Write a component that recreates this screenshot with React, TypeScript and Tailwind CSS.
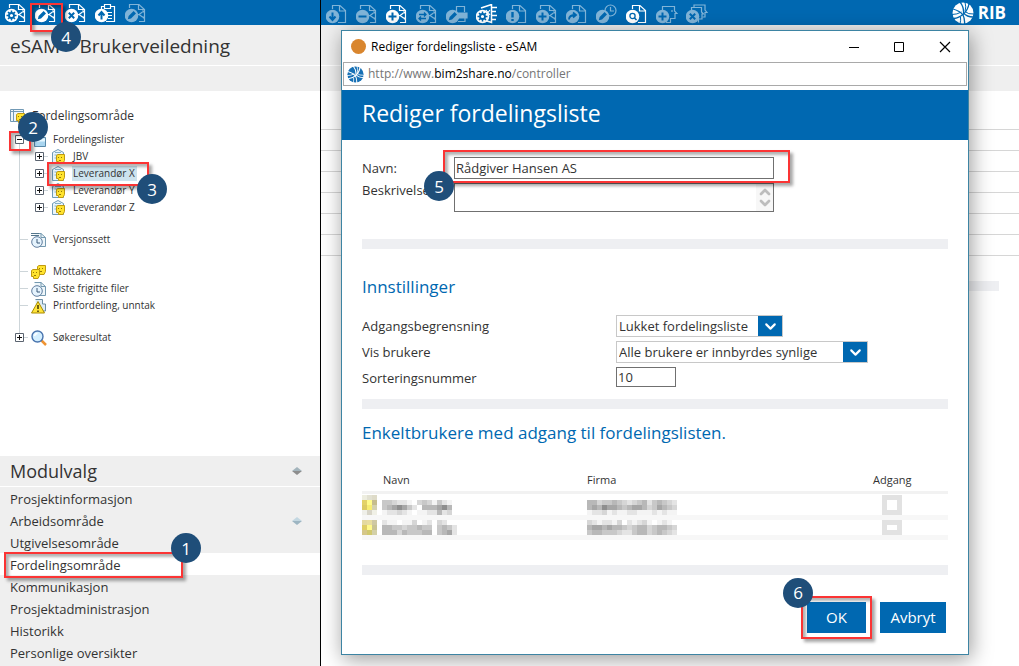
import React from "react";
import { ChevronDown, ChevronUp } from "lucide-react";

type Glyph =
  | "gear" | "pencil" | "cross" | "up" | "down" | "minus" | "plus" | "swap" | "alert" | "forward" | "search";
type Backing = "share" | "page" | "clipboard" | "printer" | "sheets" | "clock" | "head" | "heads";

function BackingShape({ kind }: { kind: Backing }) {
  switch (kind) {
    case "share":
      return (
        <>
          <path d="M4.5 5V1.5H14L19.5 6.5V18.5H14M13.5 1.5V6.5H19" />
          <path d="M17.5 9L14 11.5L17.5 14" />
          <path d="M17 8h1.500v1.500M17 14h1.500v1.500M13 11.500h1.500" />
        </>
      );
    case "page":
      return <path d="M6.500 5V1.500H14L19.500 6.500V18.500H12M13.500 1.500V7H19.500" />;
    case "clipboard":
      return (
        <>
          <path d="M6.500 6V3.500H9M16 3.500H19.500V18.500H11" />
          <path d="M9.500 1.500H15.500V5.500H9.500Z M12 9.500H17M13 12.500H17M13 15.500H17" />
        </>
      );
    case "printer":
      return (
        <>
          <path d="M10.500 8V2.500H18.500V8" />
          <path d="M8 9H21V14H11" fill="currentColor" />
          <path d="M12 17.500H19V14" />
        </>
      );
    case "sheets":
      return (
        <>
          <path d="M5 4L15.500 0.500V18.500L11 17M15.500 3.500H21M15.500 7.500H20M15.500 11.500H21M15.500 15.500H20" strokeWidth="1.500" />
          <path d="M10 6L14 11M14 6L10 11" />
        </>
      );
    case "clock":
      return (
        <>
          <circle cx="14.500" cy="6.500" r="5.500" />
          <path d="M14.500 3V7H18" />
        </>
      );
    case "head":
      return <path d="M6.500 6V2.500H18.500V7L21 9.500H19V14.500H14.500V18.500H10M16 6V8" />;
    case "heads":
      return (
        <>
          <path d="M5.500 6V3.500H15.500V8L17.500 10H16V15H12.500V18.500" />
          <path d="M8 3V1H19V6L21 8.500H19V13H16.500" />
        </>
      );
  }
}

function GlyphShape({ kind }: { kind: Glyph }) {
  switch (kind) {
    case "gear":
      return (
        <>
          <circle cx="6.500" cy="12.500" r="2.500" strokeWidth="1.800" />
          <path d="M6.500 7.500v2.500M6.500 15v2.500M1.500 12.500H4M9 12.500h2.500M3 9l1.800 1.800M8.200 14.200L10 16M3 16l1.800-1.800M8.200 10.800L10 9" strokeWidth="1.500" />
        </>
      );
    case "pencil":
      return <path d="M2.800 16.200L3.600 13L8.600 8L11 10.400L6 15.400Z" fill="#0068b1" stroke="none" />;
    case "cross":
      return <path d="M3.800 9.800L9.200 15.200M9.200 9.800L3.800 15.200" strokeWidth="2" />;
    case "up":
      return <path d="M6.500 16.500V10M3.500 12.500L6.500 9L9.500 12.500" strokeWidth="2" />;
    case "down":
      return <path d="M6.500 8.500V15M3.500 12.500L6.500 16L9.500 12.500" strokeWidth="2" />;
    case "minus":
      return <path d="M2.500 12.500H10.500" strokeWidth="2" />;
    case "plus":
      return <path d="M2.500 12.500H10.500M6.500 8.500V16.500" strokeWidth="2" />;
    case "swap":
      return <path d="M3 10.500H10M8 8.500L10 10.500L8 12.500M10 14.500H3M5 12.500L3 14.500L5 16.500" />;
    case "alert":
      return <path d="M6.500 8V13.500M6.500 15V17" strokeWidth="2.400" />;
    case "forward":
      return <path d="M3 15.500C3 12 5 11 9.500 11M7 8.500L10 11L7 13.500" strokeWidth="1.800" />;
    case "search":
      return (
        <>
          <circle cx="6.500" cy="12" r="2.600" />
          <path d="M8.500 14L10.500 16" strokeWidth="1.600" />
        </>
      );
  }
}

function ToolButton({ label, glyph, backing, dim }: { label: string; glyph: Glyph; backing: Backing; dim?: boolean }) {
  return (
    <button type="button" aria-label={label} className={dim ? "h-5 w-[22px] text-[#80b4d8]" : "h-5 w-[22px] text-white"}>
      <svg viewBox="0 0 22 20" width="22" height="20" fill="none" stroke="currentColor" strokeWidth="1.200">
        <BackingShape kind={backing} />
        <circle cx="6.500" cy="12.500" r="6.800" fill="currentColor" stroke="none" />
        <g stroke="#0068b1" strokeWidth="1.300">
          <GlyphShape kind={glyph} />
        </g>
      </svg>
    </button>
  );
}

function Badge({ n, className }: { n: number; className: string }) {
  return (
    <span className={`absolute z-20 flex size-[30px] items-center justify-center rounded-full bg-[#1f4e79] text-[17px] leading-none text-white ${className}`}>
      {n}
    </span>
  );
}

function Frame({ className }: { className: string }) {
  return (
    <span className={`pointer-events-none absolute z-10 border-2 border-[#fb3434] shadow-[3px_3px_3px_rgba(0,0,0,0.35),inset_3px_3px_3px_rgba(0,0,0,0.3)] ${className}`} />
  );
}

function RibMark({ size, disc, line }: { size: number; disc: string; line: string }) {
  return (
    <svg viewBox="0 0 22 22" width={size} height={size} fill="none">
      <circle cx="11" cy="11" r="10.500" fill={disc} />
      <g stroke={line} strokeWidth="1.300">
        <path d="M8 0Q12 5 11.500 11Q15 15 21 15" />
        <path d="M13 0Q14.500 5 13 9.500Q16 12.500 22 12" strokeWidth="1" />
        <path d="M17 1.500Q16 8 11.500 12Q7 16 1.500 16.500" />
        <path d="M0 12.500Q5 12.500 9.500 10" strokeWidth="1" />
        <path d="M1 7Q8 9 11 13Q13 17 12.500 22" />
        <path d="M8.500 15Q9 18 8 22" strokeWidth="1" />
      </g>
    </svg>
  );
}

function Face({ x, y }: { x: number; y: number }) {
  return (
    <g transform={`translate(${x} ${y})`}>
      <path d="M0.500 1.500L2 0.500H8.500V6.500L7 9.500H2.500V7.500H0.500Z" fill="#ffe32e" stroke="#c09a10" />
      <path d="M2 3.500H3M5 3.500H6M3 6.500H5" stroke="#8a6d00" strokeWidth="0.900" />
    </g>
  );
}

type TreeIconKind = "area" | "lists" | "party" | "versions" | "people" | "recent" | "warning" | "search";

function TreeIcon({ kind }: { kind: TreeIconKind }) {
  return (
    <svg viewBox="0 0 16 16" width="16" height="16" fill="none" className="shrink-0">
      {kind === "area" && (
        <>
          <path d="M0.500 1.500H13.500V13.500H0.500Z" fill="#edf5fa" stroke="#7199b5" />
          <path d="M1 3.500H13M3.500 2V13" stroke="#7199b5" />
          <Face x={6} y={5} />
        </>
      )}
      {kind === "lists" && (
        <>
          <path d="M1.500 2.500H9.500V9H1.500Z" fill="#edf5fa" stroke="#7199b5" />
          <path d="M3.500 5.500H14.500V14.500H3.500Z" fill="#a9d5ef" stroke="#5889a9" />
          <path d="M4 8H14" stroke="#e4f6ff" strokeWidth="3" />
        </>
      )}
      {kind === "party" && (
        <>
          <path d="M1.500 3.500L7 0.500L12.500 3.500V14.500H1.500Z" fill="#eaf5fb" stroke="#6f9bb8" />
          <path d="M4 3.500H10M3.500 6H10M3.500 9H8" stroke="#84b1c9" />
          <Face x={5} y={5} />
        </>
      )}
      {(kind === "versions" || kind === "recent") && (
        <>
          <path d="M3.500 1.500H10L14.500 5.500V14.500H5" fill="#eef6fa" stroke="#7499b0" />
          <path d="M10 1.500V5.500H14.500" stroke="#7499b0" />
          {kind === "versions" && <path d="M0 1.500H8M0 3.500H8" stroke="#55768c" />}
          <circle cx="6" cy="10" r="5.300" fill="#e5f3fd" stroke="#617d9e" />
          <path d="M6 7V11H9" stroke="#3b5978" />
        </>
      )}
      {kind === "people" && (
        <>
          <Face x={6} y={1} />
          <Face x={0} y={5} />
        </>
      )}
      {kind === "warning" && (
        <>
          <path d="M4.500 1.500H11.500V6H14.500V13H5" fill="#dceaf3" stroke="#6b8da3" />
          <path d="M7 3.500L13.500 15H0.500Z" fill="#ffe43b" stroke="#a98a00" />
          <path d="M7 7V11M7 12.500V14" stroke="#403300" strokeWidth="1.500" />
        </>
      )}
      {kind === "search" && (
        <>
          <path d="M10.500 10.500L15 15" stroke="#ef9332" strokeWidth="2.500" />
          <circle cx="6.500" cy="6.500" r="5.500" fill="#d4efff" stroke="#4974ae" strokeWidth="1.400" />
          <path d="M3.500 6Q4 3.500 6.500 3.500" stroke="#fff" strokeWidth="1.500" />
        </>
      )}
    </svg>
  );
}

function Expander({ open }: { open?: boolean }) {
  return (
    <button type="button" aria-label={open ? "Lukk" : "Åpne"} className="relative size-[9px] shrink-0">
      <svg viewBox="0 0 9 9" width="9" height="9" className="block" fill="#fff" stroke="#5b6470">
        <path d="M0.500 0.500H8.500V8.500H0.500Z" />
        <path d={open ? "M2 4.500H7" : "M2 4.500H7M4.500 2V7"} stroke="#111" />
      </svg>
    </button>
  );
}

type TreeRow = { label: string; icon: TreeIconKind; child?: boolean; expander?: "open" | "closed"; selected?: boolean; gap?: boolean; line?: "start" | "end" };

const treeRows: TreeRow[] = [
  { label: "Fordelingslister", icon: "lists", expander: "open", line: "start" },
  { label: "JBV", icon: "party", child: true, expander: "closed" },
  { label: "Leverandør X", icon: "party", child: true, expander: "closed", selected: true },
  { label: "Leverandør Y", icon: "party", child: true, expander: "closed" },
  { label: "Leverandør Z", icon: "party", child: true, expander: "closed" },
  { label: "Versjonssett", icon: "versions", gap: true },
  { label: "Mottakere", icon: "people", gap: true },
  { label: "Siste frigitte filer", icon: "recent" },
  { label: "Printfordeling, unntak", icon: "warning" },
  { label: "Søkeresultat", icon: "search", expander: "closed", gap: true, line: "end" },
];

function TreeItem({ row }: { row: TreeRow }) {
  const lineClass =
    row.line === "start"
      ? "absolute left-[19px] top-2 bottom-0 w-px bg-[#cdd5d9]"
      : row.line === "end"
        ? "absolute left-[19px] top-0 bottom-2 w-px bg-[#cdd5d9]"
        : "absolute left-[19px] inset-y-0 w-px bg-[#cdd5d9]";
  return (
    <li className={row.gap ? "relative pt-[15px]" : "relative"}>
      <span className={lineClass} />
      <div className={row.child ? "relative flex h-[17px] items-center pl-[35px]" : "relative flex h-[17px] items-center pl-[15px]"}>
        {row.expander ? <Expander open={row.expander === "open"} /> : <span className="ml-1 w-[5px] border-t border-[#cdd5d9]" />}
        <span className="w-1 border-t border-[#cdd5d9]" />
        <span className="w-[3px]" />
        <TreeIcon kind={row.icon} />
        <a href="#" className={row.selected ? "ml-[5px] bg-[#cde3ee] pr-[2px] pl-[1px] text-[10px] leading-[15px]" : "ml-[6px] text-[10px] leading-[15px]"}>
          {row.label}
        </a>
        {row.line === "start" && (
          <>
            <Frame className="top-0 left-[9px] h-5 w-[22px]" />
            <Badge n={2} className="-top-[19px] left-[18px]" />
          </>
        )}
        {row.selected && (
          <>
            <Frame className="-top-[3px] left-[47px] h-6 w-[102px]" />
            <Badge n={3} className="top-[9px] left-[137px]" />
          </>
        )}
      </div>
    </li>
  );
}

const modules = [
  "Prosjektinformasjon",
  "Arbeidsområde",
  "Utgivelsesområde",
  "Fordelingsområde",
  "Kommunikasjon",
  "Prosjektadministrasjon",
  "Historikk",
  "Personlige oversikter",
];

function Diamond({ top, bottom }: { top: string; bottom: string }) {
  return (
    <svg viewBox="0 0 10 8" width="10" height="8">
      <path d="M0 4L5 0L10 4Z" fill={top} />
      <path d="M0 4L5 8L10 4Z" fill={bottom} />
    </svg>
  );
}

function Sidebar() {
  return (
    <aside className="flex w-[321px] shrink-0 flex-col border-r border-black">
      <div className="relative flex h-[25px] gap-2 bg-[#0068b1] pt-[3px] pl-[5px]">
        <ToolButton label="Innstillinger" glyph="gear" backing="share" />
        <ToolButton label="Rediger" glyph="pencil" backing="share" />
        <ToolButton label="Slett" glyph="cross" backing="share" />
        <ToolButton label="Last opp" glyph="up" backing="clipboard" />
        <ToolButton label="Koble" glyph="pencil" backing="share" dim />
        <Frame className="top-[3px] left-[30px] h-[29px] w-[33px]" />
        <Badge n={4} className="top-[22px] left-[51px]" />
      </div>
      <h1 className="h-[41px] border-b border-white bg-[#efefef] pl-[10px] text-[19px] leading-[42px]">eSAM – Brukerveiledning</h1>
      <div className="h-[25px] bg-[#efefef]" />
      <nav className="flex-1 pt-4 pb-6">
        <div className="mb-[7px] flex h-[17px] items-center gap-[6px] pl-[10px] text-[12px]">
          <TreeIcon kind="area" />
          Fordelingsområde
        </div>
        <ul>
          {treeRows.map((row) => (
            <TreeItem key={row.label} row={row} />
          ))}
        </ul>
      </nav>
      <section className="bg-[#efefef] pb-[3px]">
        <div className="flex h-[31px] items-center justify-between border-b border-white pr-[18px] pl-[10px]">
          <h2 className="text-[18px]">Modulvalg</h2>
          <Diamond top="#a3b4bc" bottom="#8d8d8d" />
        </div>
        <ul className="text-[13px] leading-5">
          {modules.map((m, i) => (
            <li key={m} className={i === 3 ? "relative bg-white" : "relative"}>
              <a href="#" className="flex h-[22px] items-center justify-between pt-[2px] pr-[18px] pl-[10px]">
                {m}
                {i === 1 && <Diamond top="#c3d7e1" bottom="#9db5c2" />}
              </a>
              {i === 3 && (
                <>
                  <Frame className="-top-px left-1 h-[26px] w-[179px]" />
                  <Badge n={1} className="-top-5 left-[171px]" />
                </>
              )}
            </li>
          ))}
        </ul>
      </section>
    </aside>
  );
}

function Mosaic({ rows, width }: { rows: string[][]; width: number }) {
  return (
    <svg width={width} height={rows.length * 5} viewBox={`0 0 ${width} ${rows.length * 5}`} shapeRendering="crispEdges" className="block">
      {rows.map((r, y) => r.map((c, x) => <rect key={`${x}-${y}`} x={x * 5} y={y * 5} width="5" height="5" fill={`#${c}`} />))}
    </svg>
  );
}

const gray = (lines: string[]) =>
  lines.map((l) => l.split("").map((d) => ({ "0": "fff", "1": "f4f4f4", "2": "e4e4e4", "3": "d6d6d6", "4": "c8c8c8", "5": "b8b8b8", "6": "a6a6a6", "7": "8e8e8e" })[d] as string));

const users = [
  {
    icon: [
      ["ededdf", "e2e1d2", "dedbc8"],
      ["e3d267", "fffb8b", "c6bd8c"],
      ["dccb63", "f7ed71", "d4d1ae"],
      ["efefe9", "d8d5c8", "f0f0e6"],
    ],
    name: gray(["44322103431421", "45676420555675", "12232101122523"]),
    firm: gray(["553445432345245432", "565766545665346543", "122312112211121211"]),
    check: "block h-5 w-5 appearance-none border-[5px] border-[#e2e2e2] bg-white",
    row: "h-[25px]",
  },
  {
    icon: [
      ["e4d9a0", "e8dda0", "cfc8a3"],
      ["dfce66", "fff98b", "c9c394"],
      ["d5c789", "d0c86f", "d3d0a8"],
    ],
    name: gray(["211011301203200", "554434454404542", "555354445504562"]),
    firm: gray(["321221302123101210", "566565543455345543", "455444322455345432"]),
    check: "block h-[15px] w-5 appearance-none border-[5px] border-[#e2e2e2] bg-white",
    row: "h-5",
  },
];

function Select({ id, value, className }: { id: string; value: string; className: string }) {
  return (
    <div className={`relative h-[22px] ${className}`}>
      <select id={id} defaultValue={value} className="block h-[22px] w-full appearance-none border border-[#c8c8c8] bg-white pl-[2px] text-[13px] leading-5 outline-none">
        <option>{value}</option>
      </select>
      <span className="pointer-events-none absolute top-px right-px flex h-5 w-6 items-center justify-center bg-[#0068b1] text-white">
        <ChevronDown size={17} strokeWidth={3} />
      </span>
    </div>
  );
}

function Divider({ className }: { className: string }) {
  return <div className={`h-[10px] bg-[#eeeff2] ${className}`} />;
}

function Dialog() {
  return (
    <div role="dialog" aria-label="Rediger fordelingsliste" className="absolute top-[30px] right-[50px] left-5 z-10 border border-[#3d84a3] bg-white pb-[21px] shadow-[2px_4px_20px_rgba(0,0,0,0.4)]">
      <div className="flex h-[31px] items-center pl-[9px] text-[12px] text-black">
        <span className="mr-[5px] size-[15px] rounded-full bg-[#d9862e]" />
        <span className="flex-1">Rediger fordelingsliste - eSAM</span>
        <svg viewBox="0 0 102 12" width="102" height="12" fill="none" stroke="#000" className="mr-[17px]">
          <path d="M0 6.500H10M45.500 1.500H54.500V10.500H45.500Z" />
          <path d="M91 1L101 11M101 1L91 11" strokeWidth="1.200" />
        </svg>
      </div>
      <div className="mx-px mb-1 flex h-6 items-center gap-1 border border-[#a9a9a9] pl-[3px]">
        <RibMark size={17} disc="#1670b5" line="#fff" />
        <span className="text-[12px] leading-4 text-[#757575]">
          http://www.<span className="text-black">bim2share.no</span>/controller
        </span>
      </div>
      <h2 className="flex h-[50px] items-center bg-[#0068b1] pb-[3px] pl-5 text-[23px] leading-none text-white">Rediger fordelingsliste</h2>
      <form className="px-5 pt-[17px] text-[13px]" onSubmit={(e) => e.preventDefault()}>
        <div className="relative grid grid-cols-[92px_320px]">
          <label htmlFor="navn" className="leading-[22px]">Navn:</label>
          <input id="navn" defaultValue="Rådgiver Hansen AS" className="h-[22px] border border-[#707070] px-px text-[13px] outline-none" />
          <label htmlFor="beskrivelse" className="leading-[22px]">Beskrivelse:</label>
          <div className="relative mt-1 h-[29px]">
            <textarea id="beskrivelse" className="block h-[29px] w-full resize-none overflow-hidden border border-[#707070] outline-none" />
            <span className="absolute top-px right-px bottom-px flex w-[17px] flex-col items-center justify-between bg-[#f7f7f7] text-[#bdbdbd]">
              <ChevronUp size={16} strokeWidth={4} />
              <ChevronDown size={16} strokeWidth={4} className="-mt-2" />
            </span>
          </div>
          <Frame className="-top-[7px] left-[81px] h-[33px] w-[347px]" />
          <Badge n={5} className="top-[14px] left-[62px]" />
        </div>
        <Divider className="mt-[27px]" />
        <h3 className="mt-[26px] text-[17px] leading-6 text-[#0068b1]">Innstillinger</h3>
        <div className="mt-4 grid grid-cols-[254px_1fr] gap-y-1 leading-[22px]">
          <label htmlFor="adgang">Adgangsbegrensning</label>
          <Select id="adgang" value="Lukket fordelingsliste" className="w-[167px]" />
          <label htmlFor="vis">Vis brukere</label>
          <Select id="vis" value="Alle brukere er innbyrdes synlige" className="w-[252px]" />
          <label htmlFor="sort">Sorteringsnummer</label>
          <input id="sort" defaultValue="10" className="h-5 w-[60px] border border-[#707070] px-px text-[13px] outline-none" />
        </div>
        <Divider className="mt-[10px]" />
        <h3 className="mt-3 text-[17px] leading-6 text-[#0068b1]">Enkeltbrukere med adgang til fordelingslisten.</h3>
        <table className="mt-[23px] w-full table-fixed border-collapse text-left">
          <colgroup>
            <col className="w-5" />
            <col className="w-[205px]" />
            <col />
            <col className="w-[76px]" />
          </colgroup>
          <thead>
            <tr className="h-6 border-b-[3px] border-[#f2f2f2] align-top text-[11px] leading-4">
              <th />
              <th className="pt-1 pl-[1px] font-normal">Navn</th>
              <th className="pt-1 font-normal">Firma</th>
              <th className="pt-1 pl-[1px] font-normal">Adgang</th>
            </tr>
          </thead>
          <tbody>
            {users.map((u, i) => (
              <tr key={i} className={`border-b-[5px] border-[#f7f7f7] align-bottom ${u.row}`}>
                <td className="p-0"><Mosaic rows={u.icon} width={15} /></td>
                <td className="p-0"><Mosaic rows={u.name} width={75} /></td>
                <td className="p-0"><Mosaic rows={u.firm} width={90} /></td>
                <td className="p-0 pl-[10px]"><input type="checkbox" aria-label="Adgang" className={u.check} /></td>
              </tr>
            ))}
          </tbody>
        </table>
        <Divider className="mt-[25px]" />
        <div className="mt-[27px] flex justify-end gap-[14px] pr-[2px] text-[15px] text-white">
          <div className="relative">
            <button type="submit" className="block h-[31px] w-[59px] bg-[#0068b1]">OK</button>
            <Frame className="-inset-[6px]" />
            <Badge n={6} className="-top-6 -left-6" />
          </div>
          <button type="button" className="h-[31px] w-[66px] bg-[#0068b1]">Avbryt</button>
        </div>
      </form>
    </div>
  );
}

export default function App() {
  return (
    <div className="flex min-h-screen overflow-hidden bg-white font-['Open_Sans','Noto_Sans',sans-serif] text-[#333]">
      <Sidebar />
      <main className="relative min-w-0 flex-1">
        <div className="flex h-[25px] items-center bg-[#0068b1] pr-[13px] pl-[5px]">
          <div className="flex flex-1 gap-2 pt-[3px]">
            <ToolButton label="Last ned" glyph="down" backing="page" dim />
            <ToolButton label="Fjern" glyph="minus" backing="share" dim />
            <ToolButton label="Legg til" glyph="plus" backing="share" />
            <ToolButton label="Bytt" glyph="swap" backing="share" dim />
            <ToolButton label="Rediger utskrift" glyph="pencil" backing="printer" dim />
            <ToolButton label="Regler" glyph="gear" backing="sheets" />
            <ToolButton label="Varsel" glyph="alert" backing="page" dim />
            <ToolButton label="Ny fil" glyph="plus" backing="share" dim />
            <ToolButton label="Videresend" glyph="forward" backing="page" dim />
            <ToolButton label="Rediger tid" glyph="pencil" backing="clock" dim />
            <ToolButton label="Søk" glyph="search" backing="page" />
            <ToolButton label="Ny bruker" glyph="plus" backing="head" dim />
            <ToolButton label="Fjern brukere" glyph="cross" backing="heads" dim />
          </div>
          <div className="flex items-center gap-1 text-white">
            <RibMark size={22} disc="#fff" line="#0068b1" />
            <span className="text-[17px] leading-6 font-bold">RIB</span>
          </div>
        </div>
        <div className="h-[41px] border-b border-white bg-[#efefef]" />
        <div className="h-[25px] bg-[#efefef]" />
        <div className="pt-[18px]">
          {[0, 1, 2, 3, 4, 5, 6].map((n) => (
            <div key={n} className="h-[21px] border-b border-[#d6d6d6]" />
          ))}
        </div>
        <Divider className="mx-5 mt-[25px]" />
        <Dialog />
      </main>
    </div>
  );
}
